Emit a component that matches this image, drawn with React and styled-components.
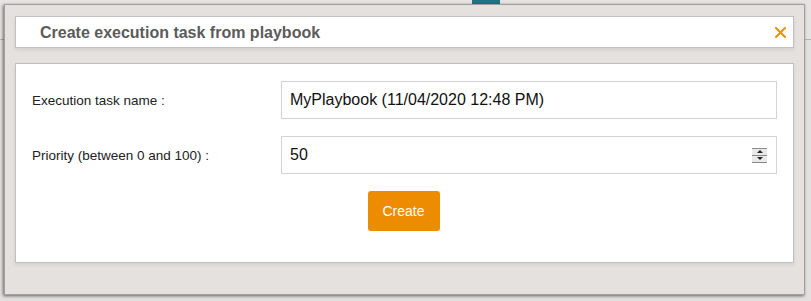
import React from "react"
import styled, { createGlobalStyle } from "styled-components";

const GlobalStyle = createGlobalStyle`
    html, body {
        margin:0;
        padding:0;
        background:#e3e1df;
        font-family:"Liberation Sans", Arial, sans-serif;
    }
`

const Page = styled.div`
    position:relative;
    width:811px;
    height:301px;
    overflow:hidden;
    background:#e3e1df;
`

const PageBar = styled.div`
    height:39px;
    border-bottom:1px solid #b5b3b1;
    background:#e6e4e2;
    display:flex;
    justify-content:flex-start;
    padding-left:472px;
`

const PageTab = styled.div`
    width:28px;
    height:5px;
    background:#1b7787;
`

const Dialog = styled.div`
    position:absolute;
    left:4px;
    top:4px;
    width:801px;
    height:291px;
    box-sizing:border-box;
    background:#e4e1df;
    border:1px solid #a2a09e;
    box-shadow:-1px 1px 3px rgba(0,0,0,0.55);
    padding:11px 10px 0 10px;
    display:flex;
    flex-direction:column;
    gap:15px;
`

const Header = styled.div`
    display:flex;
    align-items:center;
    justify-content:space-between;
    height:32px;
    box-sizing:border-box;
    background:#fff;
    border:1px solid #c2c0be;
    box-shadow:0 2px 4px rgba(0,0,0,0.08);
    padding:0 7px 0 24px;
`

const Title = styled.div`
    font-size:16px;
    font-weight:bold;
    color:#5b5b5b;
    padding-top:1px;
`

const Close = styled.button`
    border:none;
    background:none;
    padding:0;
    width:11px;
    height:11px;
    display:flex;
    align-items:center;
    justify-content:center;
    cursor:pointer;
`

const Body = styled.div`
    background:#fff;
    border:1px solid #c2c0be;
    box-shadow:0 2px 4px rgba(0,0,0,0.08);
    padding:17px 16px 31px 16px;
    display:flex;
    flex-direction:column;
    gap:17px;
`

const Row = styled.div`
    display:flex;
    align-items:center;
`

const Label = styled.label`
    width:249px;
    font-size:13.5px;
    color:#222;
`

const Field = styled.div`
    flex:1;
    height:38px;
    box-sizing:border-box;
    border:1px solid #d3d3d3;
    display:flex;
    align-items:center;
    padding:0 9px 0 8px;
`

const TextInput = styled.input`
    flex:1;
    border:none;
    outline:none;
    padding:0;
    font-family:"Liberation Sans", Arial, sans-serif;
    font-size:16px;
    color:#111;
    background:transparent;
`

const Spinner = styled.div`
    width:15px;
    height:15px;
    box-sizing:border-box;
    display:flex;
    flex-direction:column;
    border-top:1px solid #8a8a8a;
    border-bottom:1px solid #8a8a8a;
    background:#e9e9e9;
`

const SpinHalf = styled.div`
    flex:1;
    display:flex;
    align-items:center;
    justify-content:center;
    ${props => props.top ? "border-bottom:1px solid #8a8a8a;" : ""}
`

const Arrow = styled.div`
    width:0;
    height:0;
    border-left:3px solid transparent;
    border-right:3px solid transparent;
    ${props => props.up ? "border-bottom:3px solid #222;" : "border-top:3px solid #222;"}
`

const Actions = styled.div`
    display:flex;
    justify-content:center;
    padding-right:2px;
`

const CreateButton = styled.button`
    width:72px;
    height:40px;
    border:none;
    border-radius:3px;
    background:#ee8c00;
    color:#fff;
    font-family:"Liberation Sans", Arial, sans-serif;
    font-size:14px;
    cursor:pointer;
`

const App = () => {
    return (
        <Page>
            <GlobalStyle/>
            <PageBar>
                <PageTab/>
            </PageBar>
            <Dialog>
                <Header>
                    <Title>Create execution task from playbook</Title>
                    <Close>
                        <svg width="11" height="11" viewBox="0 0 11 11">
                            <path d="M1 1 L10 10 M10 1 L1 10" stroke="#f0900a" strokeWidth="2" strokeLinecap="square"/>
                        </svg>
                    </Close>
                </Header>
                <Body>
                    <Row>
                        <Label>Execution task name :</Label>
                        <Field>
                            <TextInput defaultValue="MyPlaybook (11/04/2020 12:48 PM)"/>
                        </Field>
                    </Row>
                    <Row>
                        <Label>Priority (between 0 and 100) :</Label>
                        <Field>
                            <TextInput defaultValue="50"/>
                            <Spinner>
                                <SpinHalf top><Arrow up/></SpinHalf>
                                <SpinHalf><Arrow/></SpinHalf>
                            </Spinner>
                        </Field>
                    </Row>
                    <Actions>
                        <CreateButton>Create</CreateButton>
                    </Actions>
                </Body>
            </Dialog>
        </Page>
    );
};

export default App;
